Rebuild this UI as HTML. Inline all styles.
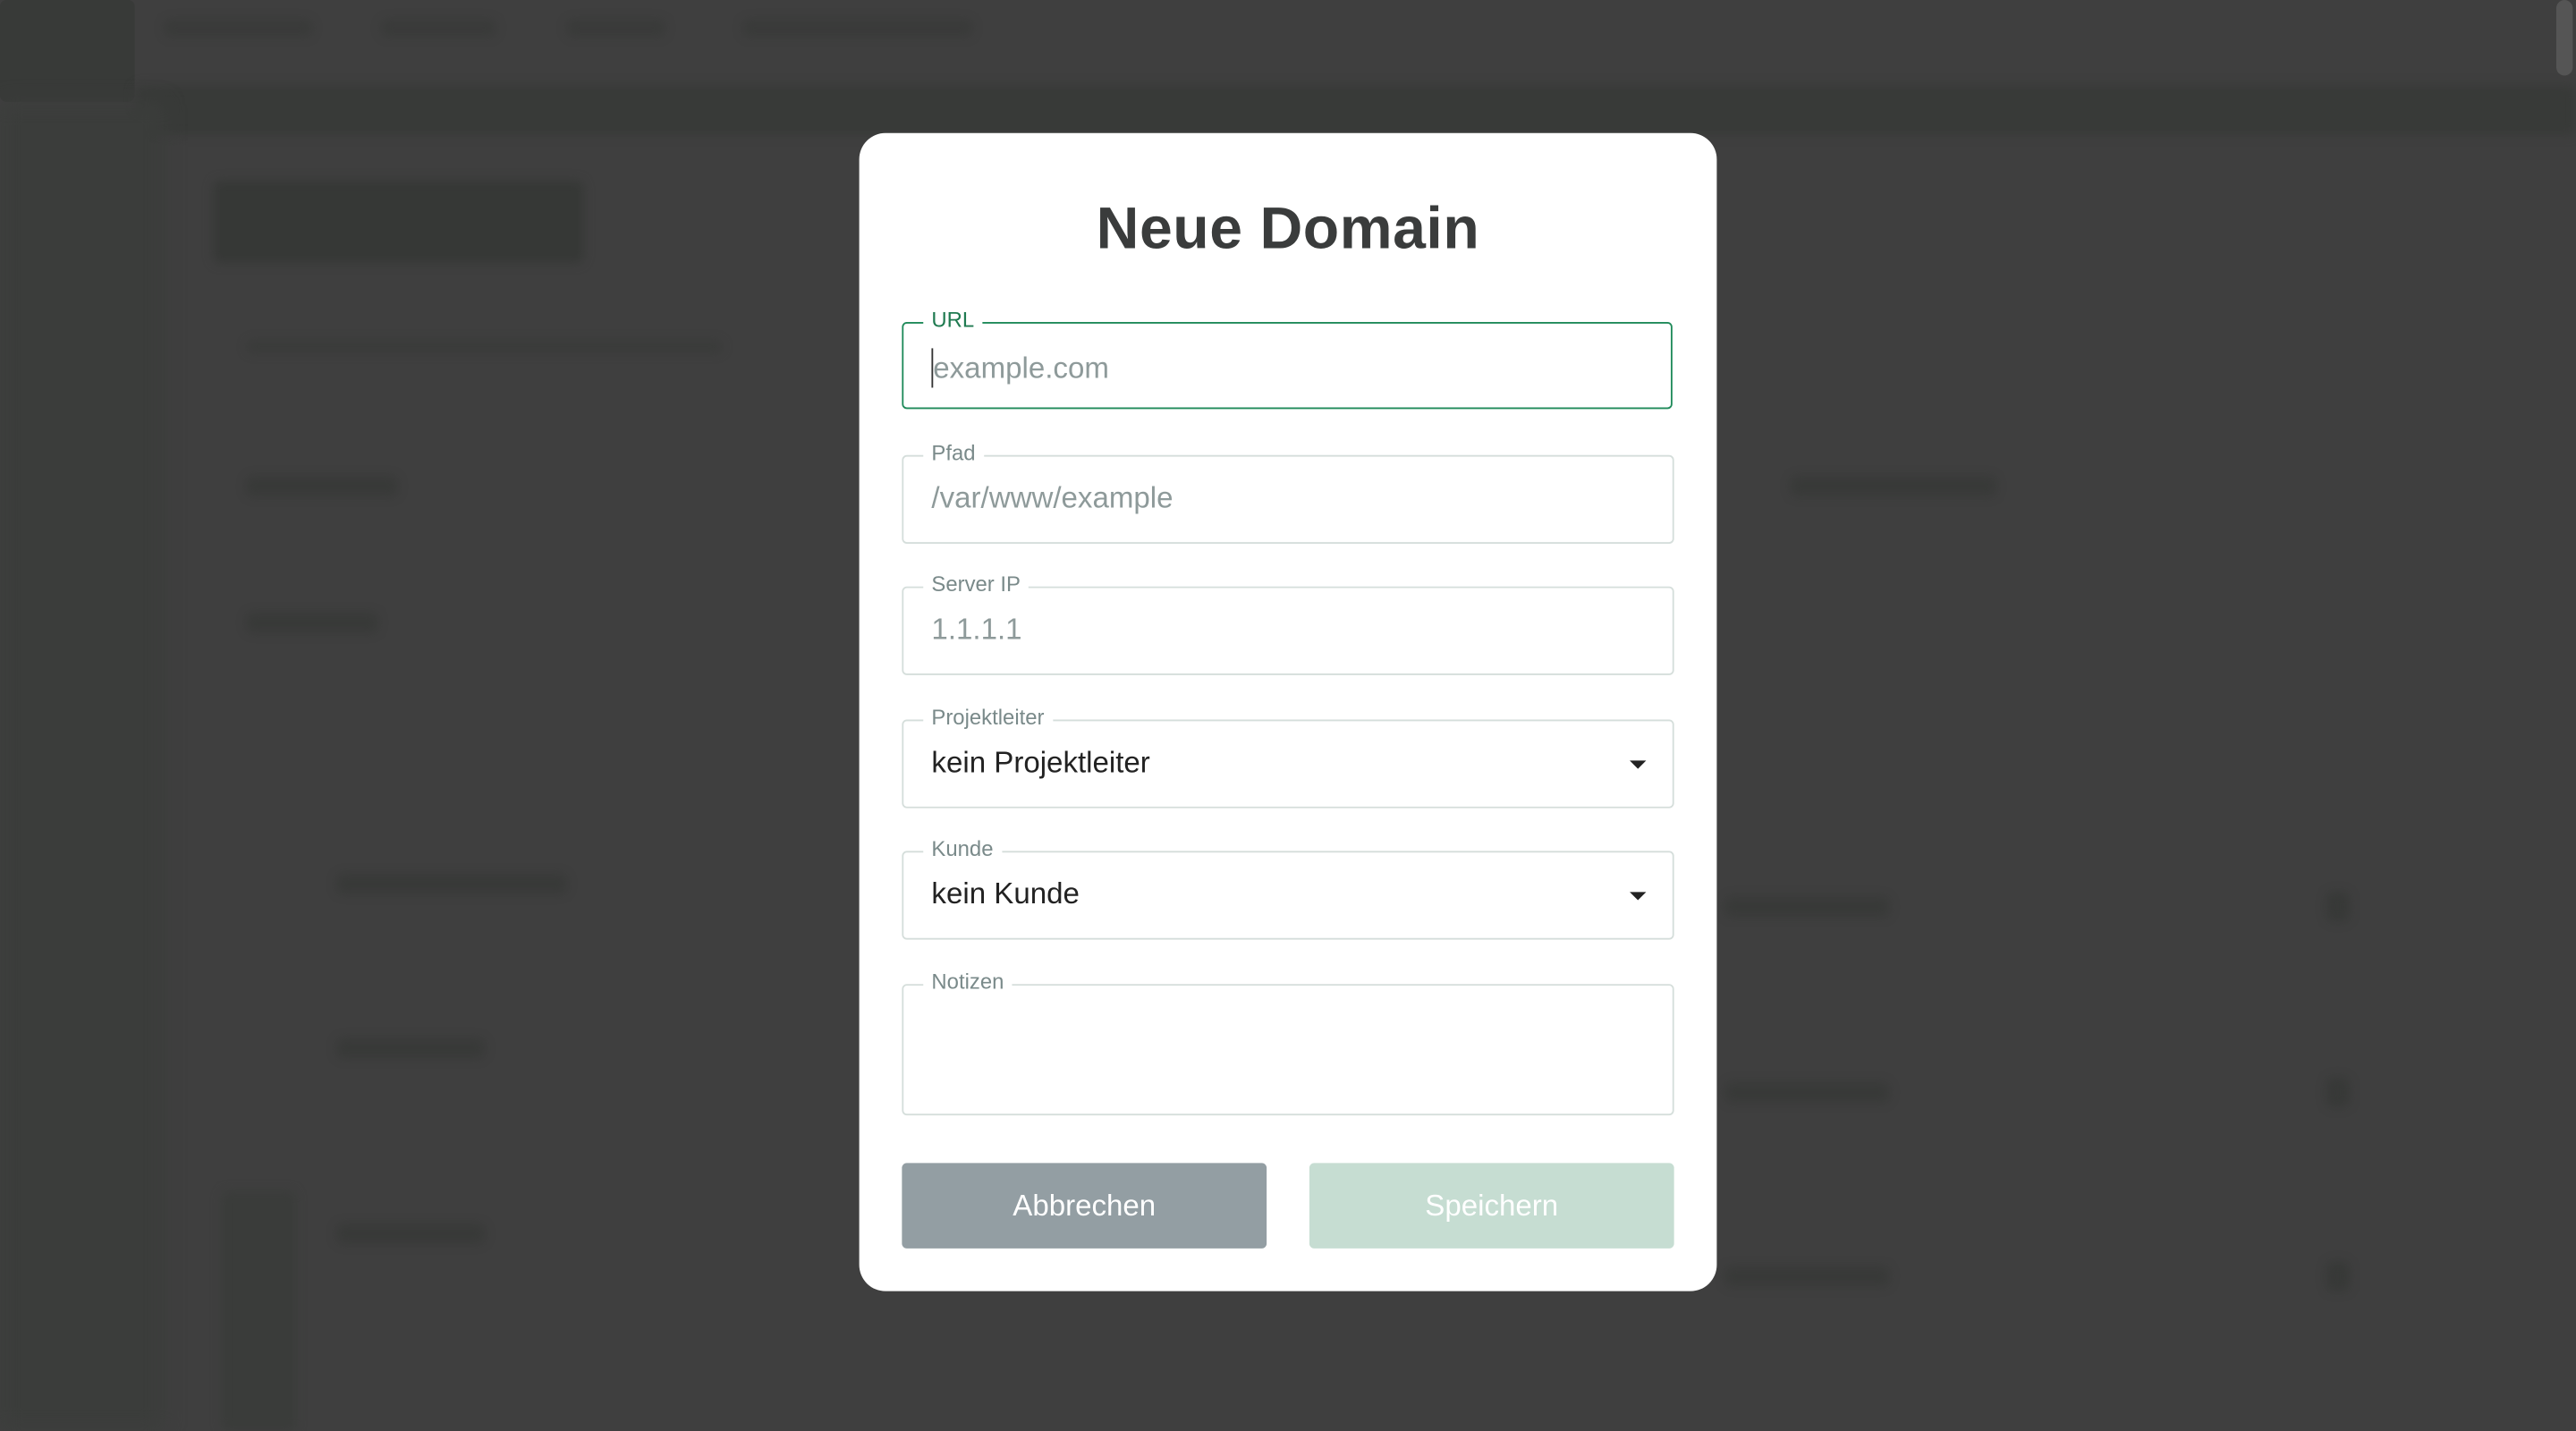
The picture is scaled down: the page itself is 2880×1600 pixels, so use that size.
<!DOCTYPE html>
<html><head><meta charset="utf-8"><style>
html,body{margin:0;padding:0;width:2880px;height:1600px;overflow:hidden;background:#3f3f3f;font-family:"Liberation Sans",sans-serif}
#s{position:absolute;left:0;top:0;width:1568px;height:871px;transform:scale(1.836735);transform-origin:0 0}
.b{position:absolute;background:#363836;filter:blur(3px);border-radius:4px}
.modal{position:absolute;left:523px;top:81px;width:522px;height:705px;background:#fff;border-radius:16px}
h1{position:absolute;left:0;right:0;top:118px;margin:0;text-align:center;font-size:36px;font-weight:bold;color:#3a3c3c;letter-spacing:0.3px}
.f{position:absolute;left:549px;width:468px;height:52px;border:1px solid #d5dedb;border-radius:3px;background:#fff}
.f .l{position:absolute;left:12px;top:-10px;padding:0 5px;background:#fff;font-size:13px;color:#7a8a8a}
.f .v{position:absolute;left:17px;top:15px;font-size:18px;color:#8e9a9a}
.f .s{color:#222}
.car{position:absolute;right:16px;top:24px;width:0;height:0;border-left:5px solid transparent;border-right:5px solid transparent;border-top:5px solid #222}
.btn{position:absolute;top:708px;width:222px;height:52px;border-radius:3px;color:#fff;font-size:18px;text-align:center;line-height:52px}
</style></head><body><div id="s">
<div class="b" style="left:0;top:0;width:82px;height:62px;filter:none;background:#383a38"></div>
<div class="b" style="left:82px;top:52px;width:1486px;height:30px;background:#383a38"></div>
<div class="b" style="left:0;top:62px;width:100px;height:809px;background:#3b3d3b;filter:blur(6px)"></div>
<div class="b" style="left:130px;top:110px;width:225px;height:50px"></div>
<div class="b" style="left:100px;top:12px;width:90px;height:10px;opacity:.6"></div>
<div class="b" style="left:232px;top:12px;width:70px;height:10px;opacity:.6"></div>
<div class="b" style="left:345px;top:12px;width:60px;height:10px;opacity:.6"></div>
<div class="b" style="left:452px;top:12px;width:140px;height:10px;opacity:.6"></div>
<div class="b" style="left:150px;top:290px;width:92px;height:12px;opacity:.7"></div>
<div class="b" style="left:150px;top:373px;width:80px;height:12px;opacity:.7"></div>
<div class="b" style="left:150px;top:207px;width:290px;height:8px;opacity:.5"></div>
<div class="b" style="left:1090px;top:290px;width:125px;height:12px;opacity:.7"></div>
<div class="b" style="left:205px;top:532px;width:140px;height:12px;opacity:.7"></div>
<div class="b" style="left:205px;top:632px;width:90px;height:12px;opacity:.7"></div>
<div class="b" style="left:205px;top:745px;width:90px;height:12px;opacity:.7"></div>
<div class="b" style="left:1050px;top:546px;width:100px;height:12px;opacity:.7"></div>
<div class="b" style="left:1050px;top:659px;width:100px;height:12px;opacity:.7"></div>
<div class="b" style="left:1050px;top:771px;width:100px;height:12px;opacity:.7"></div>
<div class="b" style="left:1416px;top:543px;width:14px;height:18px;opacity:.8"></div>
<div class="b" style="left:1416px;top:656px;width:14px;height:18px;opacity:.8"></div>
<div class="b" style="left:1416px;top:768px;width:14px;height:18px;opacity:.8"></div>
<div class="b" style="left:135px;top:725px;width:45px;height:146px;background:#3a3c3a"></div>
<div class="b" style="left:1556px;top:0;width:10px;height:46px;background:#555;filter:none;border-radius:5px"></div>
<div class="modal"></div>
<h1>Neue Domain</h1>
<div class="f" style="top:196px;border:1.5px solid #1f8a5a;width:467px;height:51px"><span class="l" style="color:#1f7a50">URL</span><span class="v" style="left:17px"><span style="display:inline-block;width:1px;height:24px;background:#333;vertical-align:-6px"></span>example.com</span></div>
<div class="f" style="top:277px"><span class="l">Pfad</span><span class="v">/var/www/example</span></div>
<div class="f" style="top:357px"><span class="l">Server IP</span><span class="v">1.1.1.1</span></div>
<div class="f" style="top:438px"><span class="l">Projektleiter</span><span class="v s">kein Projektleiter</span><div class="car"></div></div>
<div class="f" style="top:518px"><span class="l">Kunde</span><span class="v s">kein Kunde</span><div class="car"></div></div>
<div class="f" style="top:599px;height:78px"><span class="l">Notizen</span></div>
<div class="btn" style="left:549px;background:#939ea3">Abbrechen</div>
<div class="btn" style="left:797px;background:#c6ddd2">Speichern</div>
</div></body></html>
